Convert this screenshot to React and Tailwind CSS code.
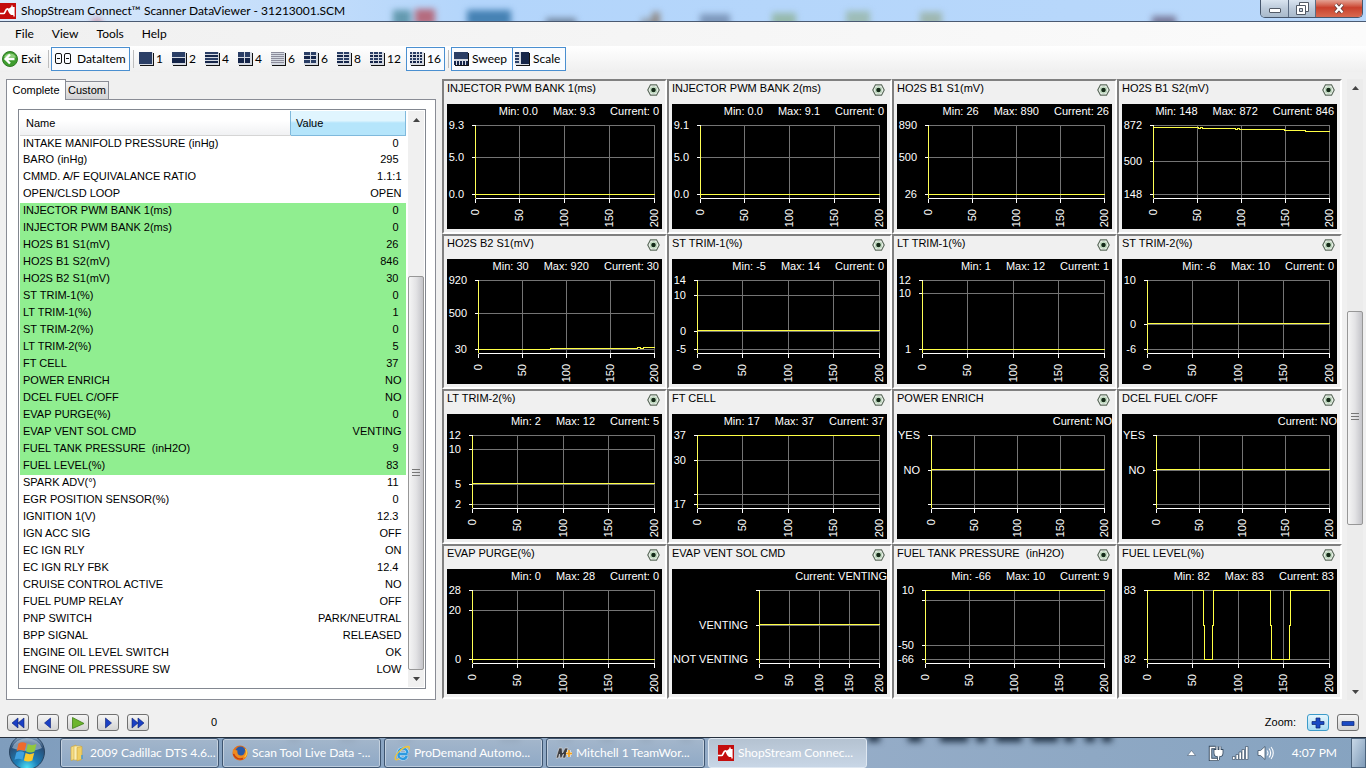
import React, { useState } from 'react';
import clsx from 'clsx';

const ITEMS = [
  ['INTAKE MANIFOLD PRESSURE (inHg)', '0'],
  ['BARO (inHg)', '295'],
  ['CMMD. A/F EQUIVALANCE RATIO', '1.1:1'],
  ['OPEN/CLSD LOOP', 'OPEN'],
  ['INJECTOR PWM BANK 1(ms)', '0', true],
  ['INJECTOR PWM BANK 2(ms)', '0', true],
  ['HO2S B1 S1(mV)', '26', true],
  ['HO2S B1 S2(mV)', '846', true],
  ['HO2S B2 S1(mV)', '30', true],
  ['ST TRIM-1(%)', '0', true],
  ['LT TRIM-1(%)', '1', true],
  ['ST TRIM-2(%)', '0', true],
  ['LT TRIM-2(%)', '5', true],
  ['FT CELL', '37', true],
  ['POWER ENRICH', 'NO', true],
  ['DCEL FUEL C/OFF', 'NO', true],
  ['EVAP PURGE(%)', '0', true],
  ['EVAP VENT SOL CMD', 'VENTING', true],
  ['FUEL TANK PRESSURE  (inH2O)', '9', true],
  ['FUEL LEVEL(%)', '83', true],
  ['SPARK ADV(°)', '11'],
  ['EGR POSITION SENSOR(%)', '0'],
  ['IGNITION 1(V)', '12.3'],
  ['IGN ACC SIG', 'OFF'],
  ['EC IGN RLY', 'ON'],
  ['EC IGN RLY FBK', '12.4'],
  ['CRUISE CONTROL ACTIVE', 'NO'],
  ['FUEL PUMP RELAY', 'OFF'],
  ['PNP SWITCH', 'PARK/NEUTRAL'],
  ['BPP SIGNAL', 'RELEASED'],
  ['ENGINE OIL LEVEL SWITCH', 'OK'],
  ['ENGINE OIL PRESSURE SW', 'LOW'],
];

// ticks: [value, label], highest first. left: x of the value axis.
const CHARTS = [
  { title: 'INJECTOR PWM BANK 1(ms)', min: '0.0', max: '9.3', current: '0', left: 28, value: 0, ticks: [[9.3, '9.3'], [5, '5.0'], [0, '0.0']] },
  { title: 'INJECTOR PWM BANK 2(ms)', min: '0.0', max: '9.1', current: '0', left: 28, value: 0, ticks: [[9.1, '9.1'], [5, '5.0'], [0, '0.0']] },
  { title: 'HO2S B1 S1(mV)', min: '26', max: '890', current: '26', left: 31, value: 26, ticks: [[890, '890'], [500, '500'], [26, '26']] },
  { title: 'HO2S B1 S2(mV)', min: '148', max: '872', current: '846', left: 31, trace: 'M31 23H76V24H78V23H80V24H113V25H115V24H117V25H162V26H183V27H207', ticks: [[872, '872'], [500, '500'], [148, '148']] },
  { title: 'HO2S B2 S1(mV)', min: '30', max: '920', current: '30', left: 31, trace: 'M31 90H103V89H190V88H193V89H196V88H207', ticks: [[920, '920'], [500, '500'], [30, '30']] },
  { title: 'ST TRIM-1(%)', min: '-5', max: '14', current: '0', left: 25, value: 0, ticks: [[14, '14'], [10, '10'], [0, '0'], [-5, '-5']] },
  { title: 'LT TRIM-1(%)', min: '1', max: '12', current: '1', left: 25, value: 1, ticks: [[12, '12'], [10, '10'], [1, '1']] },
  { title: 'ST TRIM-2(%)', min: '-6', max: '10', current: '0', left: 25, value: 0, ticks: [[10, '10'], [0, '0'], [-6, '-6']] },
  { title: 'LT TRIM-2(%)', min: '2', max: '12', current: '5', left: 25, value: 5, ticks: [[12, '12'], [10, '10'], [5, '5'], [2, '2']] },
  { title: 'FT CELL', min: '17', max: '37', current: '37', left: 25, value: 37, ticks: [[37, '37'], [30, '30'], [20, ''], [17, '17']] },
  { title: 'POWER ENRICH', current: 'NO', left: 34, value: 1, ticks: [[2, 'YES'], [1, 'NO'], [0, '']] },
  { title: 'DCEL FUEL C/OFF', current: 'NO', left: 34, value: 1, ticks: [[2, 'YES'], [1, 'NO'], [0, '']] },
  { title: 'EVAP PURGE(%)', min: '0', max: '28', current: '0', left: 25, value: 0, ticks: [[28, '28'], [20, '20'], [0, '0']] },
  { title: 'EVAP VENT SOL CMD', current: 'VENTING', left: 87, value: 1, ticks: [[2, ''], [1, 'VENTING'], [0, 'NOT VENTING']] },
  { title: 'FUEL TANK PRESSURE  (inH2O)', min: '-66', max: '10', current: '9', left: 28, value: 10, ticks: [[10, '10'], [0, ''], [-50, '-50'], [-66, '-66']] },
  { title: 'FUEL LEVEL(%)', min: '82', max: '83', current: '83', left: 25, trace: 'M25 21H81V56H82V90H90V56H91V21H148V56H149V90H167V56H168V21H207', ticks: [[83, '83'], [82, '82']] },
];

const TOP = 21;
const BOTTOM = 90;
const AXIS = 94;
const RIGHT = 207;

const Chart = ({ chart }) => {
  const { title, min, max, current, left, value, trace, ticks } = chart;
  const high = ticks[0][0];
  const low = ticks[ticks.length - 1][0];
  const toY = v => TOP + ((high - v) / (high - low)) * (BOTTOM - TOP);
  const xs = [0, 50, 100, 150, 200].map(n => [n, Math.floor(left + ((RIGHT - left) * n) / 200)]);
  const path = trace || `M${left} ${Math.floor(toY(value))}H${RIGHT}`;

  return (
    <section className="border-2 border-t-[#808080] border-l-[#808080] border-r-white border-b-white px-[3px] pb-[3px]">
      <div className="flex h-[23px] items-start justify-between">
        <h2 className="whitespace-pre leading-[14px]">{title}</h2>
        <button aria-label={`${title} options`} className="mt-[3px] mr-[2px]">
          <svg width="13" height="12" viewBox="0 0 13 12">
            <path d="M3.5 .8h6l2.7 5.2-2.7 5.2h-6L.8 6z" fill="#fff" stroke="#5b6b5b" strokeWidth="1.2" />
            <circle cx="6.5" cy="6" r="3.6" fill="#d3ebd3" stroke="#9cbc9c" strokeWidth=".6" />
            <circle cx="6.5" cy="6" r="2.3" fill="#142a18" />
          </svg>
        </button>
      </div>
      <div className="bg-black text-white">
        <div className={clsx('flex h-4 justify-end gap-[15px] leading-[14px]', min && 'pr-[3px]')}>
          {min && <span>Min: {min}</span>}
          {max && <span>Max: {max}</span>}
          <span>Current: {current}</span>
        </div>
        <svg viewBox="0 16 215 109" className="block w-full" fill="#fff" fontSize="11">
          <g transform="translate(.5 .5)" fill="none" shapeRendering="crispEdges">
            {ticks.map(([v]) => <path key={v} d={`M${left} ${Math.ceil(toY(v))}H${RIGHT}`} stroke="#747474" />)}
            {xs.map(([n, x]) => <path key={n} d={`M${x} ${TOP}V${AXIS}`} stroke="#747474" />)}
            {ticks.map(([v]) => <path key={v} d={`M${left - 4} ${Math.ceil(toY(v))}H${left}`} stroke="#fff" />)}
            {xs.map(([n, x]) => <path key={n} d={`M${x} ${AXIS}V${AXIS + 4}`} stroke="#fff" />)}
            <path d={`M${left} ${AXIS}H${RIGHT}`} stroke="#fff" />
            <path d={`M${left} ${TOP}V${AXIS - 1}`} stroke="#ffff55" />
            <path d={path} stroke="#ffff44" />
          </g>
          {ticks.map(([v, label]) => (
            <text key={v} x={left - 11} y={Math.ceil(toY(v)) + 4} textAnchor="end">{label}</text>
          ))}
          {xs.map(([n, x]) => (
            <text key={n} transform={`translate(${x + 4} 105) rotate(-90)`} textAnchor="end">{n}</text>
          ))}
        </svg>
      </div>
    </section>
  );
};

const GridIcon = ({ cols, rows, pale }) => {
  const cells = [];
  const w = 13 / cols;
  const h = 12 / rows;
  for (let r = 0; r < rows; r++) {
    for (let c = 0; c < cols; c++) {
      cells.push(
        <rect key={`${r}-${c}`} x={Math.round(c * w)} y={Math.round(r * h)}
          width={Math.round((c + 1) * w) - Math.round(c * w) - (cols > 1 ? 1 : 0)}
          height={Math.round((r + 1) * h) - Math.round(r * h) - (rows > 1 ? 1 : 0)}
          fill={pale ? '#8d8d9c' : r % 2 ? '#16264a' : '#2b3f66'} />
      );
    }
  }
  return (
    <svg width="15" height="14" viewBox="0 0 15 14" shapeRendering="crispEdges">
      <path d="M1 1h14v13H1z" fill="#111" />
      <path d="M0 0h14v13H0z" fill="#d5dae2" />
      {cells}
    </svg>
  );
};

const Separator = () => <span className="h-[18px] w-px bg-[#bdbdbd]" />;

const LAYOUTS = [
  ['1', 1, 1], ['2', 1, 2], ['4', 1, 4], ['4', 2, 2], ['6', 1, 6, true], ['6', 2, 3], ['8', 2, 4], ['12', 3, 4],
];

const AppLogo = () => (
  <svg width="16" height="16" viewBox="0 0 16 16">
    <path d="M0 0h16v16H0z" fill="#c40d0d" />
    <path d="M0 10.5h3.5c2 0 1.6-4.6 4-4.6 1.8 0 .8 3.4 2.6 3.4" fill="none" stroke="#fff" strokeWidth="1.7" />
    <path d="M9 5.5l2-1.5h3.6v8H11L9 10z" fill="#fff" />
    <path d="M12 2.6v2M14 12v1.5" stroke="#fff" strokeWidth="1.4" />
  </svg>
);

const BLOBS = [
  [393, 18, '#4d8a9c', 10], [415, 20, '#b4505f', 9], [467, 44, '#2b6da3', 10], [546, 30, '#67788e', 18],
  [641, 14, '#8e97a0', 18], [652, 8, '#8a7c70', 12], [700, 30, '#6f88ab', 14], [772, 24, '#8fb39a', 13],
  [846, 24, '#97b7a8', 11], [920, 22, '#98b0a0', 12], [1152, 24, '#6a6483', 16], [92, 10, '#c98b9e', 18],
];

const TitleBar = () => (
  <header className="relative flex h-[22px] justify-between overflow-hidden border-b border-[#4a5a72] bg-linear-to-r from-[#dceafa] via-[#b3d5fb] via-35% to-[#b9d8fb]">
    <svg className="absolute inset-0 h-8 w-full blur-[3px]" aria-hidden="true">
      {BLOBS.map(([x, w, color, y]) => <rect key={x} x={x} y={y} width={w} height="16" fill={color} opacity=".8" />)}
    </svg>
    <div className="relative flex items-center gap-[5px]">
      <AppLogo />
      <h1>ShopStream Connect™ Scanner DataViewer - 31213001.SCM</h1>
    </div>
    <div className="relative mr-[3px] flex h-[18px] overflow-hidden rounded-b-[5px] border border-t-0 border-[#46566c]">
      <button aria-label="Minimize" className="flex w-7 items-end justify-center border-r border-[#5c6d84] bg-linear-to-b from-[#d9e4f0] via-[#bccada] via-50% to-[#a9bacb] pb-1">
        <span className="h-[5px] w-3 rounded-[1px] border border-[#525a66] bg-white" />
      </button>
      <button aria-label="Restore" className="flex w-[27px] items-center justify-center border-r border-[#5c6d84] bg-linear-to-b from-[#d9e4f0] via-[#bccada] via-50% to-[#a9bacb]">
        <svg width="13" height="13" viewBox="0 0 13 13" fill="#fff" stroke="#525a66">
          <path d="M3.5 .5h9v9h-9z" />
          <path d="M.5 3.5h9v9h-9z" />
          <path d="M3.5 6.5h3v3h-3z" fill="#c9d4e0" />
        </svg>
      </button>
      <button aria-label="Close" className="flex w-[46px] items-center justify-center bg-linear-to-b from-[#e3a193] via-[#c9402c] via-45% to-[#d8694f]">
        <svg width="12" height="11" viewBox="0 0 12 11" fill="none">
          <path d="M2.5 1.5l7 8M9.5 1.5l-7 8" stroke="#5c3a3a" strokeWidth="4" />
          <path d="M2.5 1.5l7 8M9.5 1.5l-7 8" stroke="#fff" strokeWidth="2.4" />
        </svg>
      </button>
    </div>
  </header>
);

const Toolbar = () => (
  <div className="flex h-[26px] items-center bg-linear-to-b from-white to-[#efefef] pb-px">
    <button className="flex w-12 items-center gap-[3px] pl-[2px]">
      <svg width="16" height="16" viewBox="0 0 16 16">
        <circle cx="8" cy="8" r="7.5" fill="#3f9d2f" stroke="#2f7a24" />
        <path d="M2 6.5a6.2 5.5 0 0 1 12 0z" fill="#8fd07c" />
        <path d="M8 3.5L3.5 8 8 12.5M4 8h8.5" fill="none" stroke="#fff" strokeWidth="2.3" />
      </svg>
      Exit
    </button>
    <Separator />
    <button className="ml-[2px] mr-[3px] flex h-6 w-[79px] items-center gap-[5px] border border-[#4a8fd0] bg-[#fafcff] pl-[3px]">
      <svg width="17" height="11" viewBox="0 0 17 11" fill="none" stroke="#111">
        <rect x=".5" y=".5" width="6" height="10" rx="1.5" />
        <rect x="9.5" y=".5" width="6" height="10" rx="1.5" />
        <path d="M2 5.5h3M11 5.5h3" />
      </svg>
      DataItem
    </button>
    <Separator />
    <div className="ml-[5px] flex">
      {LAYOUTS.map(([label, cols, rows, pale], i) => (
        <button key={i} className={clsx('flex h-6 items-center gap-[2px]', label === '12' ? 'w-9' : 'w-[33px]')}>
          <GridIcon cols={cols} rows={rows} pale={pale} />
          {label}
        </button>
      ))}
    </div>
    <button className="mr-[3px] flex h-6 w-[39px] items-center gap-[2px] border border-[#4a8fd0] bg-[#fafcff] pl-[3px]">
      <GridIcon cols={4} rows={4} />
      16
    </button>
    <Separator />
    <button className="ml-[2px] flex h-6 w-[62px] items-center gap-[3px] border border-[#4a8fd0] bg-[#fafcff] pl-[2px]">
      <svg width="15" height="14" viewBox="0 0 15 14" shapeRendering="crispEdges">
        <path d="M1 1h14v13H1z" fill="#111" />
        <path d="M0 0h14v13H0z" fill="#d5dae2" />
        <path d="M0 0h14v7H0z" fill="#2b3f66" />
        <path d="M0 9h2v4H0zM3 9h2v4H3zM6 9h2v4H6zM9 9h2v4H9zM12 9h2v4h-2z" fill="#16264a" />
      </svg>
      Sweep
    </button>
    <button className="-ml-px flex h-6 w-[54px] items-center gap-[3px] border border-[#4a8fd0] bg-[#fafcff] pl-[2px]">
      <svg width="15" height="14" viewBox="0 0 15 14" shapeRendering="crispEdges">
        <path d="M1 1h14v13H1z" fill="#111" />
        <path d="M0 0h14v13H0z" fill="#d5dae2" />
        <path d="M6 0h8v12H6z" fill="#16264a" />
        <path d="M0 0h4v2H0zM0 3h4v2H0zM0 6h4v2H0zM0 9h4v2H0z" fill="#2b3f66" />
      </svg>
      Scale
    </button>
  </div>
);

const Arrow = ({ down }) => (
  <button aria-label={down ? 'Scroll down' : 'Scroll up'} className="flex h-[17px] items-center justify-center">
    <svg width="7" height="4" viewBox="0 0 7 4"><path d={down ? 'M0 0h7L3.5 4z' : 'M0 4h7L3.5 0z'} fill="#444" /></svg>
  </button>
);

const Thumb = ({ className }) => (
  <div className={clsx('flex items-center justify-center rounded-[2px] border border-[#979797] bg-linear-to-r from-[#f5f5f5] via-[#e3e3e5] via-50% to-[#c4c4c9]', className)}>
    <svg width="8" height="9" viewBox="0 0 8 9"><path d="M0 .5h8M0 3.5h8M0 6.5h8" stroke="#777" /></svg>
  </div>
);

const DataList = () => {
  const [tab, setTab] = useState('Complete');
  return (
    <aside className="flex w-[442px] shrink-0 flex-col pr-1.5 pl-1.5">
      <div className="flex items-end" role="tablist">
        {['Complete', 'Custom'].map(name => (
          <button
            key={name}
            role="tab"
            aria-selected={tab === name}
            onClick={() => setTab(name)}
            className={clsx(
              'border border-b-0 border-[#898c95]',
              tab === name ? 'relative -mb-px h-[21px] w-[60px] bg-white' : '-ml-px h-[18px] w-11 bg-linear-to-b from-[#f2f2f2] to-[#d2d2d4]'
            )}
          >
            {name}
          </button>
        ))}
      </div>
      <div className="flex flex-1 border border-[#898c95] bg-white pt-[9px] pr-[9px] pb-[10px] pl-[11px]">
        <div className="flex flex-1 border border-[#828790] p-px">
          <div className="flex-1">
            <table className="w-full border-collapse">
              <thead>
                <tr className="h-6 text-left">
                  <th className="border-b border-[#d5d5d5] bg-linear-to-b from-white from-40% to-[#f0f1f3] pl-1.5 font-normal">Name</th>
                  <th className="w-[115px] border border-t-0 border-[#7fb9dc] bg-linear-to-b from-[#e0f5fe] from-40% to-[#b5e5fb] to-50% pl-[5px] font-normal">Value</th>
                </tr>
              </thead>
              <tbody>
                {ITEMS.map(([name, val, on]) => (
                  <tr key={name} className={clsx('h-[17px] leading-[14px]', on && 'bg-[#90ee90]')}>
                    <td className="whitespace-pre p-0 pl-[3px] align-top">{name}</td>
                    <td className={clsx('p-0 text-right align-top', /^[\d.]+$/.test(val) ? 'pr-[7px]' : 'pr-1')}>{val}</td>
                  </tr>
                ))}
              </tbody>
            </table>
          </div>
          <div className="ml-0.5 flex w-4 flex-col bg-[#f0f0f0]">
            <Arrow />
            <div className="flex-[149]" />
            <Thumb className="flex-[393]" />
            <Arrow down />
          </div>
        </div>
      </div>
    </aside>
  );
};

const NAV = [
  ['First', <path key="a" d="M8 1v10L2 6zM14 1v10L8 6z" fill="#1a3fc4" stroke="#0a1f70" strokeWidth=".6" />],
  ['Back', <path key="b" d="M10.5 1v10L4.5 6z" fill="#1a3fc4" stroke="#0a1f70" strokeWidth=".6" />],
  ['Play', <path key="c" d="M2.5 .5v11L14 6.5z" fill="#6cb52d" stroke="#3f7d18" strokeWidth=".8" />],
  ['Forward', <path key="d" d="M5.5 1v10l6-5z" fill="#1a3fc4" stroke="#0a1f70" strokeWidth=".6" />],
  ['Last', <path key="e" d="M2 1v10l6-5zM8 1v10l6-5z" fill="#1a3fc4" stroke="#0a1f70" strokeWidth=".6" />],
];

const PushButton = ({ label, hot, children }) => (
  <button
    aria-label={label}
    className={clsx(
      'flex h-[17px] w-[22px] items-center justify-center rounded-[3px] border',
      hot ? 'border-[#3c9bc9] bg-linear-to-b from-[#e6f6fd] to-[#a9dbf3]' : 'border-[#707070] bg-linear-to-b from-[#f5f5f5] to-[#d3d3d3]'
    )}
  >
    <svg width="16" height="12" viewBox="0 0 16 12">{children}</svg>
  </button>
);

const Controls = () => (
  <div className="flex h-[38px] items-center border-b border-[#26303d] px-[7px] pt-[9px] pb-px">
    <div className="flex gap-2">
      {NAV.map(([label, shape]) => <PushButton key={label} label={label}>{shape}</PushButton>)}
    </div>
    <output className="ml-[62px] flex-1">0</output>
    <span className="mr-[11px]">Zoom:</span>
    <div className="flex gap-2">
      <PushButton label="Zoom in" hot>
        <path d="M6 1h4v3.5h4v3h-4V11H6V7.5H2v-3h4z" fill="#1a49c4" stroke="#0c2470" strokeWidth=".7" />
      </PushButton>
      <PushButton label="Zoom out">
        <path d="M2 4.5h12v4H2z" fill="#1a49c4" stroke="#0c2470" strokeWidth=".7" />
      </PushButton>
    </div>
  </div>
);

const FolderIcon = () => (
  <svg width="16" height="18" viewBox="0 0 16 18">
    <path d="M1 3l5-2v14l-5 1.5z" fill="#f5dc83" stroke="#c9a33c" strokeWidth=".6" />
    <path d="M4 2h7v14H4z" fill="#fbeeb4" stroke="#d2b04c" strokeWidth=".6" />
    <path d="M7 3.5l5-1V15l-5 2z" fill="#f0cf63" stroke="#c9a33c" strokeWidth=".6" />
    <path d="M12 11v4" stroke="#4a9bd4" strokeWidth="1.5" />
  </svg>
);

const FirefoxIcon = () => (
  <svg width="16" height="16" viewBox="0 0 16 16">
    <circle cx="8" cy="8" r="7.5" fill="#e2701b" />
    <circle cx="8.5" cy="6.5" r="5" fill="#2a5aa8" />
    <path d="M1 4c1 1 3 1 4.5 1.5C5 8 6 10.5 9 10.5c2.5 0 4-2 4-5 2.5 3 1.5 7-1 8.5C6 17-.5 12 1 4z" fill="#f08a1f" />
    <path d="M1.5 9c1.5 4 5.5 6 9.5 4.5" fill="none" stroke="#c43d12" strokeWidth="1.5" />
    <path d="M13.5 4c1.8 3 1.3 6-.8 8" fill="none" stroke="#fbc53a" strokeWidth="1.3" />
  </svg>
);

const ExplorerIcon = () => (
  <svg width="17" height="16" viewBox="0 0 17 16" fill="none">
    <path d="M13.5 9H4.5a4.3 4.3 0 0 0 8.3 2M4.5 8a4.4 4.4 0 0 1 8.9 0" stroke="#bfe4fb" strokeWidth="3.6" />
    <path d="M13.5 9H4.5a4.3 4.3 0 0 0 8.3 2M4.5 8a4.4 4.4 0 0 1 8.9 0" stroke="#2e9ae0" strokeWidth="2.4" />
    <path d="M1.5 14.5C-.5 11 8 2 14 1.5c2 0 1.5 2 .8 3M1.5 14.5c1 .7 2.5 0 4-1" stroke="#f3c436" strokeWidth="1.3" />
  </svg>
);

const MitchellIcon = () => (
  <svg width="17" height="12" viewBox="0 0 17 12">
    <path d="M0 11L3 1h3l.5 5L9 1h3L9.5 11h-3l1-4-2 4H4L3.5 7 2.5 11z" fill="#3c3c40" stroke="#d5d5d5" strokeWidth=".7" />
    <path d="M13 3v7M10 6.5h6" stroke="#fff" strokeWidth="3" />
    <path d="M13 3v7M10 6.5h6" stroke="#f0a020" strokeWidth="1.8" />
  </svg>
);

const TASKS = [
  ['2009 Cadillac DTS 4.6...', FolderIcon],
  ['Scan Tool Live Data -...', FirefoxIcon],
  ['ProDemand Automo...', ExplorerIcon],
  ['Mitchell 1 TeamWor...', MitchellIcon],
  ['ShopStream Connec...', AppLogo, true],
];

const SHADOWS = [
  [288, 12], [340, 16], [400, 12], [500, 20], [560, 12], [600, 14], [640, 12], [680, 12], [725, 20], [765, 12], [800, 30],
  [868, 12], [908, 14], [940, 28], [976, 10], [996, 26], [1032, 26], [1064, 10], [1085, 10], [1102, 10],
];

const Taskbar = () => (
  <footer className="relative flex h-[30px] items-end overflow-hidden bg-linear-to-r from-[#7f9dbd] via-[#96adc8] via-60% to-[#86a3c0] text-white">
    <svg className="absolute inset-x-0 -top-2 h-8 w-full blur-[3px]" fill="#26384c" aria-hidden="true">
      {SHADOWS.map(([x, w]) => <rect key={x} x={x} y="0" width={w} height="12" />)}
    </svg>
    <button aria-label="Start" className="relative ml-2 w-[52px] shrink-0">
      <svg width="38" height="34" viewBox="0 0 38 34" className="block">
        <defs>
          <radialGradient id="orb" cx=".5" cy=".95" r=".9">
            <stop offset="0" stopColor="#4fe0f5" />
            <stop offset=".35" stopColor="#1d7fb8" />
            <stop offset=".8" stopColor="#2a4c74" />
            <stop offset="1" stopColor="#88a6c4" />
          </radialGradient>
        </defs>
        <circle cx="19" cy="18" r="17.5" fill="url(#orb)" stroke="#28435f" />
        <path d="M4 14a15.5 13 0 0 1 30 0c-8 4-20 4-30 0z" fill="#dce9f5" opacity=".45" />
        <path d="M10.5 9.5c3-1.8 5.5-1.3 8 0l-1.8 7.5c-2.5-1.3-5-1.5-8 0z" fill="#ee6a2c" />
        <path d="M19.8 10c2.8 1.5 5.5 1.5 8.7 0l-1.9 7.5c-3 1.5-5.5 1.4-8.5 0z" fill="#92c83e" />
        <path d="M8.3 18.5c3-1.7 5.5-1.3 8 0l-1.8 7.3c-2.5-1.3-5-1.5-8 0z" fill="#3fa0e0" />
        <path d="M17.6 19c2.8 1.5 5.5 1.5 8.6 0l-1.9 7.5c-3 1.5-5.5 1.4-8.4 0z" fill="#fbc92c" />
      </svg>
    </button>
    <div className="relative flex h-full min-w-0 flex-1 gap-[3px]">
      {TASKS.map(([label, Icon, active]) => (
        <button
          key={label}
          className={clsx(
            'flex h-full w-[159px] items-center gap-[3px] rounded-[3px] border pl-2',
            active
              ? 'border-[#dfe8f2] bg-linear-to-b from-[#b4c2d1] to-[#c8d6e6]'
              : 'border-[#3e5570] bg-linear-to-b from-[#a6b8cc]/90 to-[#8fa9c6]/90 shadow-[inset_0_0_0_1px_rgba(255,255,255,0.4)]'
          )}
        >
          <span className="flex w-[18px] shrink-0 justify-center"><Icon /></span>
          <span className="whitespace-nowrap">{label}</span>
        </button>
      ))}
    </div>
    <div className="relative flex h-full items-center">
      <svg width="9" height="6" viewBox="0 0 9 6" className="mr-3"><path d="M.5 5.5h8l-4-5z" fill="#fff" stroke="#4c5f75" strokeWidth=".6" /></svg>
      <svg width="16" height="16" viewBox="0 0 16 16" className="mr-2" fill="none">
        <path d="M7.5 2.5h-5v12H11" stroke="#33475c" strokeWidth="3.4" />
        <path d="M7.5 2.5h-5v12H11" stroke="#fff" strokeWidth="1.6" />
        <path d="M7 5.5h7V8c0 2-1.5 3-3.5 3S7 10 7 8zM9 1.5v4M12 1.5v4M10.5 11v4" stroke="#33475c" strokeWidth="2.8" />
        <path d="M7 5.5h7V8c0 2-1.5 3-3.5 3S7 10 7 8zM9 1.5v4M12 1.5v4M10.5 11v4" fill="#fff" stroke="#fff" strokeWidth="1.2" />
      </svg>
      <svg width="17" height="14" viewBox="0 0 17 14" className="mr-2" fill="#fff" stroke="#43566b" strokeWidth=".7">
        <path d="M.5 10.5H3v3H.5zM4 8.5h2.5v5H4zM7 6h2.5v7.5H7zM10 3.5h2.5v10H10zM13.5 .5H16v13h-2.5z" />
      </svg>
      <svg width="17" height="16" viewBox="0 0 17 16" className="mr-[18px]" fill="none">
        <path d="M1 5.5h2.5L8 1.5v13l-4.5-4H1z" fill="#fff" stroke="#43566b" strokeWidth=".8" />
        <path d="M10 5.5c1.2 1.5 1.2 3.5 0 5M12 3.5c2.2 2.5 2.2 6.5 0 9M14 2c3 3.5 3 8.5 0 12" stroke="#fff" strokeWidth="1.1" />
      </svg>
      <time className="mr-[14px]">4:07 PM</time>
      <button aria-label="Show desktop" className="h-full w-[15px] border border-[#4c647d] bg-linear-to-br from-[#c9d9e8] to-[#7f9bb8]" />
    </div>
  </footer>
);

const App = () => (
  <div className="flex min-h-screen flex-col bg-[#f0f0f0] font-['Lato','Open_Sans',sans-serif] text-[12px] text-black">
    <TitleBar />
    <nav className="flex h-6 items-center gap-[18px] bg-linear-to-r from-[#f0f0f0] to-[#fbfbfb] pl-[15px]">
      {['File', 'View', 'Tools', 'Help'].map(item => <button key={item}>{item}</button>)}
    </nav>
    <Toolbar />
    <div className="flex flex-1 flex-col font-['Liberation_Sans',sans-serif] text-[11px]">
      <main className="flex flex-1 pt-[7px]">
        <DataList />
        <div className="grid flex-1 grid-cols-4 content-start">
          {CHARTS.map(chart => <Chart key={chart.title} chart={chart} />)}
        </div>
        <div className="mr-[3px] ml-[5px] flex w-4 flex-col bg-[#ececec]">
          <Arrow />
          <div className="flex-[215]" />
          <Thumb className="flex-[213]" />
          <div className="flex-[158]" />
          <Arrow down />
        </div>
      </main>
      <Controls />
    </div>
    <Taskbar />
  </div>
);

export default App;
